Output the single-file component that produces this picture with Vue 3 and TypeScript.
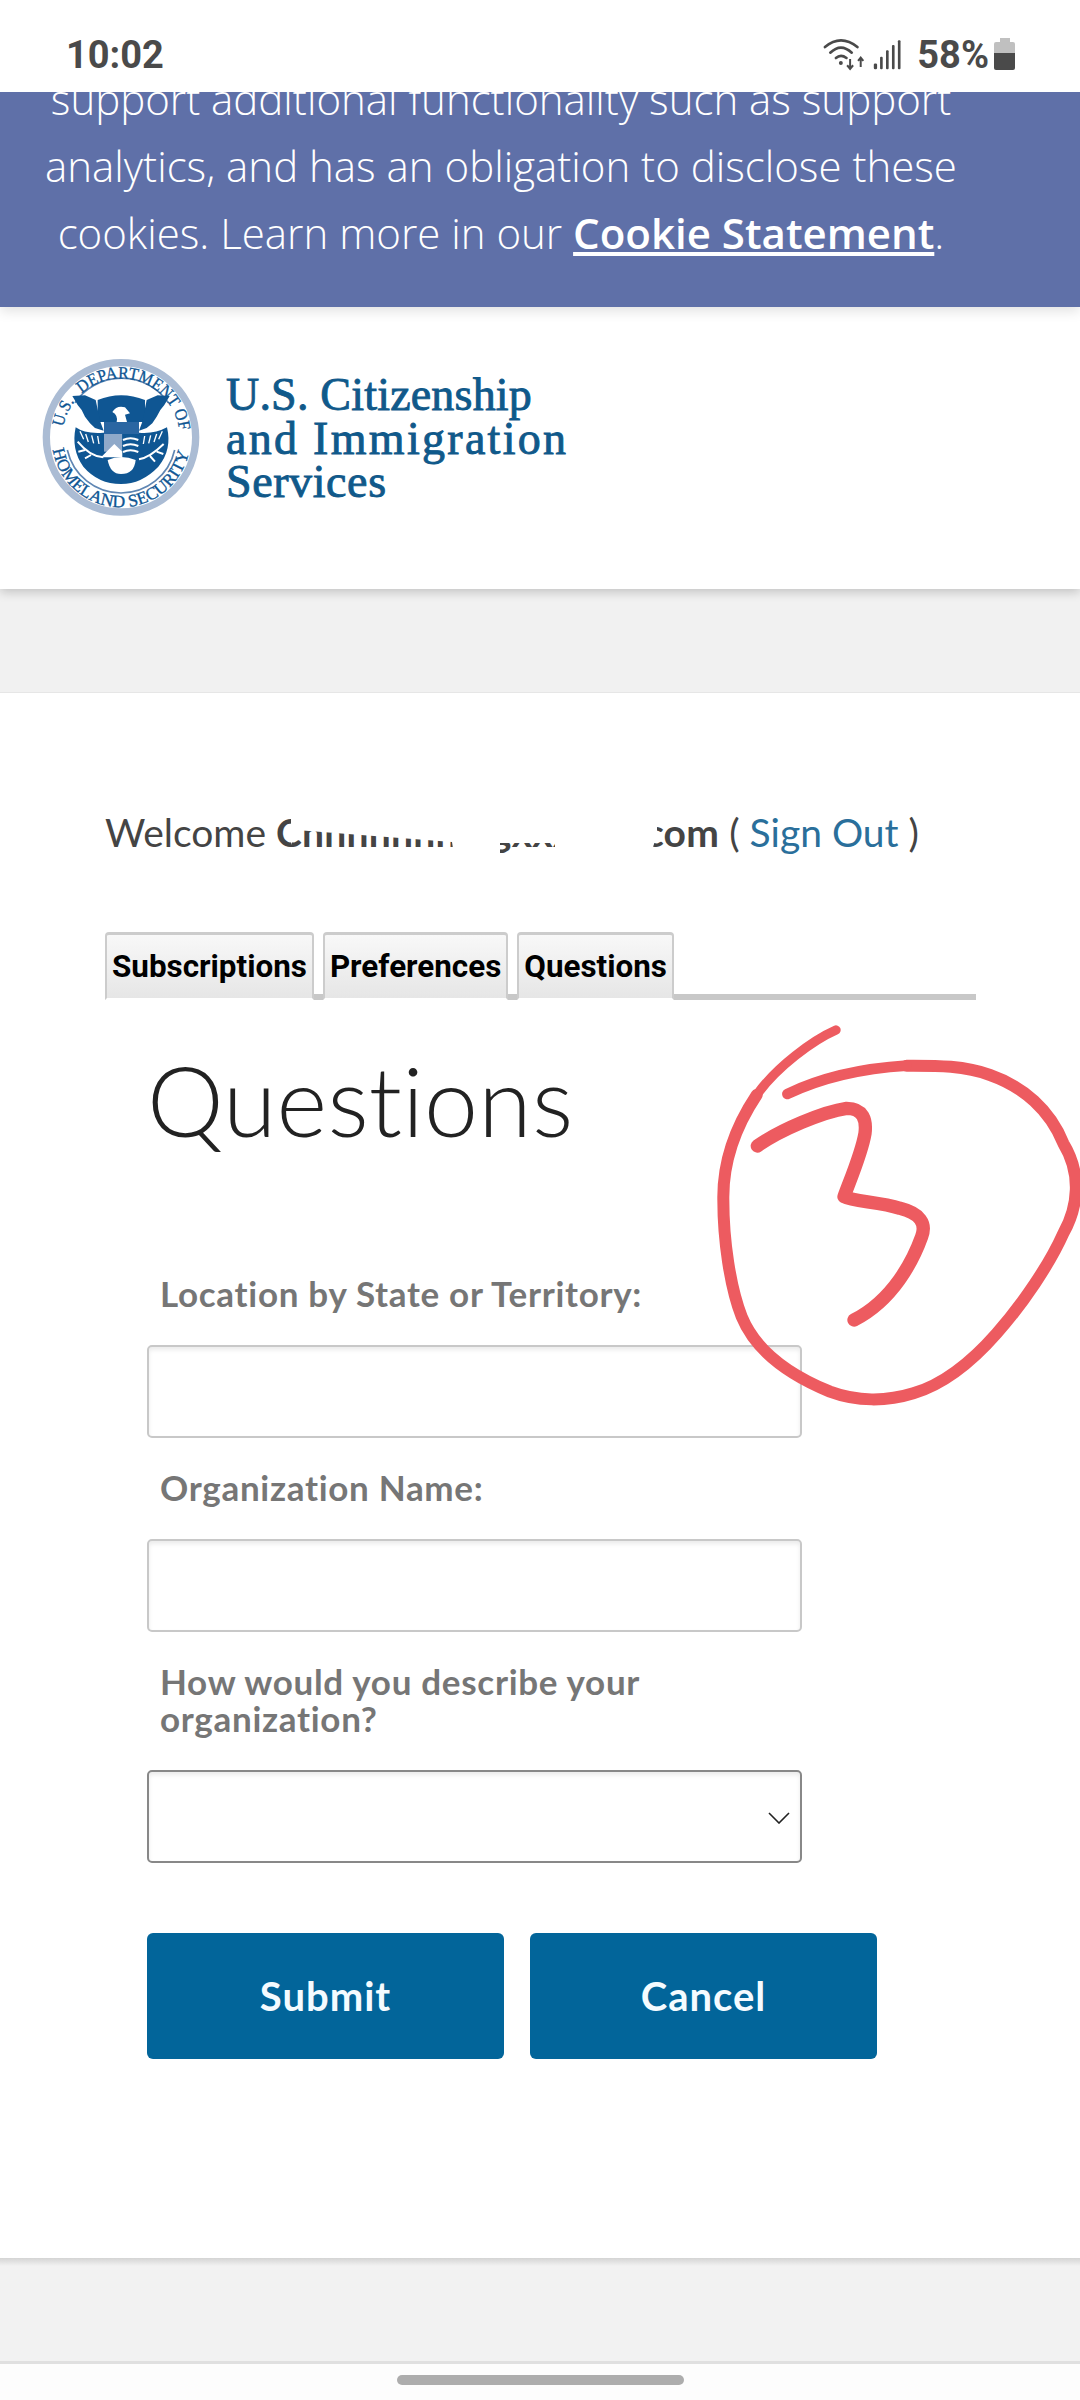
<template>
    <div class="page">
        <div class="status-bar">
            <span class="time">10:02</span>
            <div class="status-right">
                <svg class="wifi" viewBox="130 50 130 105">
                    <g fill="none" stroke="#4a4a4a" stroke-width="8" stroke-linecap="round">
                        <path d="M139 80 Q187 40 237 80" />
                        <path d="M155 97 Q187 66 220 97" />
                        <path d="M172 113 Q187 100 204 113" />
                    </g>
                    <circle cx="187" cy="128" r="6" fill="#4a4a4a" />
                    <path d="M215 116 V144 M206 135 L215 146 L224 135 M247 140 V114 M239 122 L247 112 L255 122" fill="none" stroke="#4a4a4a" stroke-width="6" />
                </svg>
                <svg class="signal" viewBox="280 55 90 100">
                    <g fill="#4a4a4a">
                        <rect x="285" y="132" width="10" height="18" rx="4" />
                        <rect x="304" y="112" width="8" height="38" rx="3" />
                        <rect x="322" y="92" width="8" height="58" rx="3" />
                        <rect x="340" y="76" width="8" height="74" rx="3" />
                        <rect x="358" y="62" width="8" height="88" rx="3" />
                    </g>
                </svg>
                <span class="percent">58%</span>
                <div class="battery">
                    <div class="battery-cap"></div>
                    <div class="battery-body"></div>
                </div>
            </div>
        </div>

        <div class="cookie-banner">
            <p>
                support additional functionality such as support<br />
                analytics, and has an obligation to disclose these<br />
                cookies. Learn more in our <a href="#">Cookie Statement</a>.
            </p>
        </div>

        <header class="site-header">
            <svg class="seal" viewBox="0 0 525 525">
                <defs>
                    <path id="arcTop" d="M140 131 A176 176 0 0 1 433 247" />
                    <path id="arcLeft" d="M85 231 A176 176 0 0 1 123 149" />
                    <path id="arcBottom" d="M53 299 A208 208 0 0 0 463 299" />
                </defs>
                <circle cx="258" cy="262" r="224" fill="#fff" stroke="#abbcd4" stroke-width="22" />
                <path d="M120 158 A170 170 0 0 1 400 158" fill="none" stroke="#5f86b3" stroke-width="5" />
                <path d="M97 300 A165 165 0 0 0 419 300" fill="none" stroke="#5f86b3" stroke-width="5" />
                <g class="seal-text">
                    <text><textPath href="#arcTop" textLength="385" lengthAdjust="spacingAndGlyphs">DEPARTMENT OF</textPath></text>
                    <text><textPath href="#arcLeft" textLength="84" lengthAdjust="spacingAndGlyphs">U.S.</textPath></text>
                    <text><textPath href="#arcBottom" textLength="575" lengthAdjust="spacingAndGlyphs">HOMELAND SECURITY</textPath></text>
                </g>
                <g fill="#0f5693">
                    <path d="M188 150 Q258 122 330 150 L330 216 L188 216 Z" />
                    <path d="M112 138 L150 136 L182 150 L196 215 L206 242 L180 234 L165 220 L150 200 L140 180 L128 165 Z" />
                    <path d="M404 138 L368 136 L335 150 L322 215 L312 242 L335 234 L352 220 L365 200 L376 180 L388 165 Z" />
                    <path d="M122 232 Q150 252 205 248 L312 248 Q360 252 396 232 Q412 300 370 350 Q320 402 258 402 Q190 402 145 350 Q108 300 122 232 Z" />
                </g>
                <path d="M135 244 L146 268 M152 252 L160 276 M170 256 L176 280 M188 258 L192 282 M382 244 L371 268 M365 252 L357 276 M347 256 L341 280 M329 258 L325 282" fill="none" stroke="#fff" stroke-width="4" />
                <path d="M232 186 Q245 165 270 172 L285 190 L270 194 L276 216 L245 216 Q250 196 232 186 Z" fill="#fff" />
                <path d="M207 216 H312 V252 H207 Z" fill="#2a66a2" />
                <path d="M207 252 H262 V305 H207 Z" fill="#8fa9c9" />
                <path d="M262 252 H312 V320 H262 Z" fill="#0f5693" />
                <path d="M264 270 Q286 260 310 270 M264 288 Q286 278 310 288 M264 306 Q286 296 310 306" fill="none" stroke="#fff" stroke-width="6" />
                <path d="M198 322 L238 282 L262 305 V322 Z" fill="#fff" />
                <path d="M218 330 Q258 312 302 330 Q298 372 258 372 Q226 372 218 330 Z" fill="#fff" />
                <path d="M128 275 Q165 320 205 322 M150 300 L130 305 M168 315 L150 325 M386 282 Q345 322 312 328 M365 305 L385 312 M345 318 L360 335" fill="none" stroke="#fff" stroke-width="6" />
            </svg>
            <div class="agency-name">
                <span class="line-one">U.S. Citizenship</span>
                <span class="line-two">and Immigration</span>
                <span class="line-three">Services</span>
            </div>
        </header>

        <div class="gray-band"></div>

        <main class="main">
            <div class="welcome">
                Welcome <strong>Cnnnnnnn@gxxxxxx.com</strong> ( <a href="#">Sign Out</a> )
                <svg class="smudge" viewBox="277 815 380 50">
                    <path d="M291 815 H657 V835 L648 862 H555 V843 H500 V862 H455 L452 842 L296 830 L291 845 Z" fill="#fff" />
                </svg>
            </div>

            <div class="tabs">
                <button v-for="tab in tabs" :key="tab" class="tab">{{ tab }}</button>
            </div>

            <form class="form" @submit.prevent>
                <h1>Questions</h1>

                <label for="location">Location by State or Territory:</label>
                <input id="location" type="text" />

                <label for="organization">Organization Name:</label>
                <input id="organization" type="text" />

                <label for="kind">How would you describe your<br />organization?</label>
                <div class="select-wrap">
                    <select id="kind"></select>
                    <svg class="chevron" viewBox="0 0 22 12">
                        <path d="M1 1 L11 11 L21 1" fill="none" stroke="#222" stroke-width="1.6" />
                    </svg>
                </div>

                <div class="actions">
                    <button type="submit" class="submit">Submit</button>
                    <button type="button" class="cancel">Cancel</button>
                </div>
            </form>
        </main>

        <footer class="footer"></footer>
        <div class="nav-bar"><div class="home-pill"></div></div>

        <svg class="scribble" viewBox="0 0 1200 1320">
            <g fill="none" stroke="#ed5b60" stroke-linecap="round" stroke-linejoin="round">
                <path stroke-width="28" d="M468 90 C400 120 290 200 230 285" />
                <path stroke-width="36" d="M230 285 C160 390 128 490 130 600 C130 720 150 860 185 950 C230 1060 340 1130 450 1175 C530 1205 620 1205 700 1180 C800 1150 880 1080 950 1000 C1030 910 1110 790 1150 700 C1195 620 1205 520 1150 430 C1110 330 1030 260 930 225 C850 195 760 197 680 197" />
                <path stroke-width="32" d="M680 197 C550 205 420 235 322 282" />
                <path stroke-width="40" d="M232 438 C300 390 430 335 500 325 C550 325 560 360 555 400 C545 460 510 540 492 590 C520 605 600 605 660 625 C720 640 740 670 725 710 C700 780 640 900 522 960" />
            </g>
        </svg>
    </div>
</template>

<script setup lang="ts">
const tabs: string[] = ["Subscriptions", "Preferences", "Questions"];
</script>

<style>
html,
body {
    margin: 0;
    background: #fff;
}
</style>

<style scoped>
.page {
    position: relative;
    width: 1080px;
    height: 2400px;
    overflow: hidden;
    display: flex;
    flex-direction: column;
    font-family: Lato, "Noto Sans", sans-serif;
    background: #fff;
}

/* Status bar */
.status-bar {
    height: 92px;
    flex: none;
    background: #fff;
    display: flex;
    justify-content: space-between;
    padding: 32px 65px 0 66px;
    box-sizing: border-box;
    font-family: Roboto, sans-serif;
    font-weight: 700;
    font-size: 38px;
    line-height: 46px;
    color: #4a4a4a;
    position: relative;
    z-index: 2;
}

.status-right {
    display: flex;
    align-items: flex-start;
}

.wifi {
    width: 43px;
    height: 35px;
    margin-top: 5px;
}

.signal {
    width: 30px;
    height: 33px;
    margin: 6px 15px 0 7px;
}

.percent {
    margin-right: 5px;
}

.battery {
    width: 21px;
    margin-top: 6px;
    display: flex;
    flex-direction: column;
    align-items: center;
}

.battery-cap {
    width: 10px;
    height: 4px;
    background: #c0c0c0;
}

.battery-body {
    width: 21px;
    height: 28px;
    border-radius: 2px;
    background: linear-gradient(#c0c0c0 40%, #4a4a4a 40%);
}

/* Cookie banner */
.cookie-banner {
    height: 215px;
    flex: none;
    background: #5f70a8;
    overflow: hidden;
    box-shadow: 0 4px 12px rgba(0, 0, 0, 0.12);
    position: relative;
    z-index: 1;
    color: #fff;
    font-family: "Open Sans", sans-serif;
    font-weight: 300;
    font-size: 42px;
    line-height: 67px;
    text-align: center;
}

.cookie-banner p {
    margin: -27px 78px 0 0;
}

.cookie-banner a {
    color: #fff;
    font-weight: 600;
    text-decoration: underline;
}

/* Header */
.site-header {
    height: 282px;
    flex: none;
    box-sizing: border-box;
    padding: 43px 0 0 35px;
    display: flex;
    align-items: flex-start;
    background: #fff;
    box-shadow: 0 3px 10px rgba(0, 0, 0, 0.2);
    position: relative;
}

.seal {
    width: 175px;
    height: 175px;
    flex: none;
}

.seal-text {
    font-family: "Liberation Serif", serif;
    font-size: 52px;
    font-weight: 400;
    fill: #0f5693;
    stroke: #0f5693;
    stroke-width: 1px;
}

.agency-name {
    margin: 23px 0 0 16px;
    font-family: "Liberation Serif", serif;
    font-size: 46px;
    font-weight: 400;
    -webkit-text-stroke: 0.9px #10598a;
    line-height: 43.5px;
    color: #10598a;
}

.agency-name span {
    display: block;
}

.line-one {
    letter-spacing: 0.2px;
}

.line-two {
    letter-spacing: 2.3px;
}

.line-three {
    letter-spacing: 0.6px;
}

.gray-band {
    height: 104px;
    flex: none;
    box-sizing: border-box;
    background: #f1f1f1;
    border-bottom: 1px solid #e6e6e6;
}

/* Main content */
.main {
    height: 1565px;
    flex: none;
    box-sizing: border-box;
    padding: 114px 104px 0 105px;
    background: #fff;
}

.welcome {
    position: relative;
    font-size: 39px;
    line-height: 50px;
    color: #444;
}

.welcome strong {
    font-weight: 700;
    letter-spacing: 0.25px;
}

.welcome a {
    color: #2a6f9b;
    text-decoration: none;
}

.smudge {
    position: absolute;
    left: 172px;
    top: 8px;
    width: 380px;
    height: 50px;
}

.tabs {
    display: flex;
    gap: 9px;
    margin-top: 75px;
    height: 62px;
    border-bottom: 6px solid #c8c8c8;
}

.tab {
    height: 68px;
    box-sizing: border-box;
    padding: 0 5px;
    border: 2px solid #ccc;
    border-top-width: 3px;
    border-bottom: 2px solid #fff;
    border-radius: 4px 4px 0 0;
    background: linear-gradient(#f8f8f8, #e6e6e6);
    font-family: Roboto, sans-serif;
    font-size: 31.4px;
    font-weight: 700;
    color: #000;
}

.form {
    display: flex;
    flex-direction: column;
    margin-left: 42px;
    width: 730px;
}

h1 {
    margin: 40px 0 0 0;
    font-weight: 300;
    font-size: 97px;
    letter-spacing: 0.2px;
    line-height: 120px;
    font-variant-ligatures: none;
    color: #222;
}

label {
    display: block;
    padding-left: 13px;
    font-size: 35px;
    font-weight: 700;
    letter-spacing: 0.7px;
    line-height: 37px;
    color: #767676;
}

h1 + label {
    margin-top: 115px;
}

input,
select {
    display: block;
    box-sizing: border-box;
    width: 655px;
    height: 93px;
    margin: 33px 0 31px;
    background: #fff;
    border: 2px solid #c8c8c8;
    border-radius: 5px;
    box-shadow: inset 0 3px 4px rgba(0, 0, 0, 0.08);
    appearance: none;
}

.select-wrap {
    position: relative;
    width: 655px;
}

select {
    border-color: #888;
}

.chevron {
    position: absolute;
    right: 12px;
    top: 75px;
    width: 22px;
    height: 12px;
}

.actions {
    display: flex;
    gap: 26px;
    margin-top: 39px;
}

.actions button {
    height: 126px;
    border: none;
    border-radius: 6px;
    background: #02659a;
    color: #f4fbff;
    font-family: Lato, sans-serif;
    font-size: 40px;
    letter-spacing: 1px;
    font-weight: 700;
}

.submit {
    width: 357px;
}

.cancel {
    width: 347px;
}

/* Footer and navigation */
.footer {
    height: 106px;
    flex: none;
    box-sizing: border-box;
    background: linear-gradient(#d4d4d4, #f2f2f2 8px);
    border-bottom: 3px solid #e0e0e0;
}

.nav-bar {
    flex: 1;
    background: #fdfdfd;
    padding-top: 11px;
}

.home-pill {
    width: 287px;
    height: 10px;
    margin: 0 auto;
    border-radius: 5px;
    background: #adadad;
}

/* Hand-drawn mark on top of the screenshot */
.scribble {
    position: absolute;
    left: 680px;
    top: 1000px;
    width: 400px;
    height: 440px;
    pointer-events: none;
}
</style>
